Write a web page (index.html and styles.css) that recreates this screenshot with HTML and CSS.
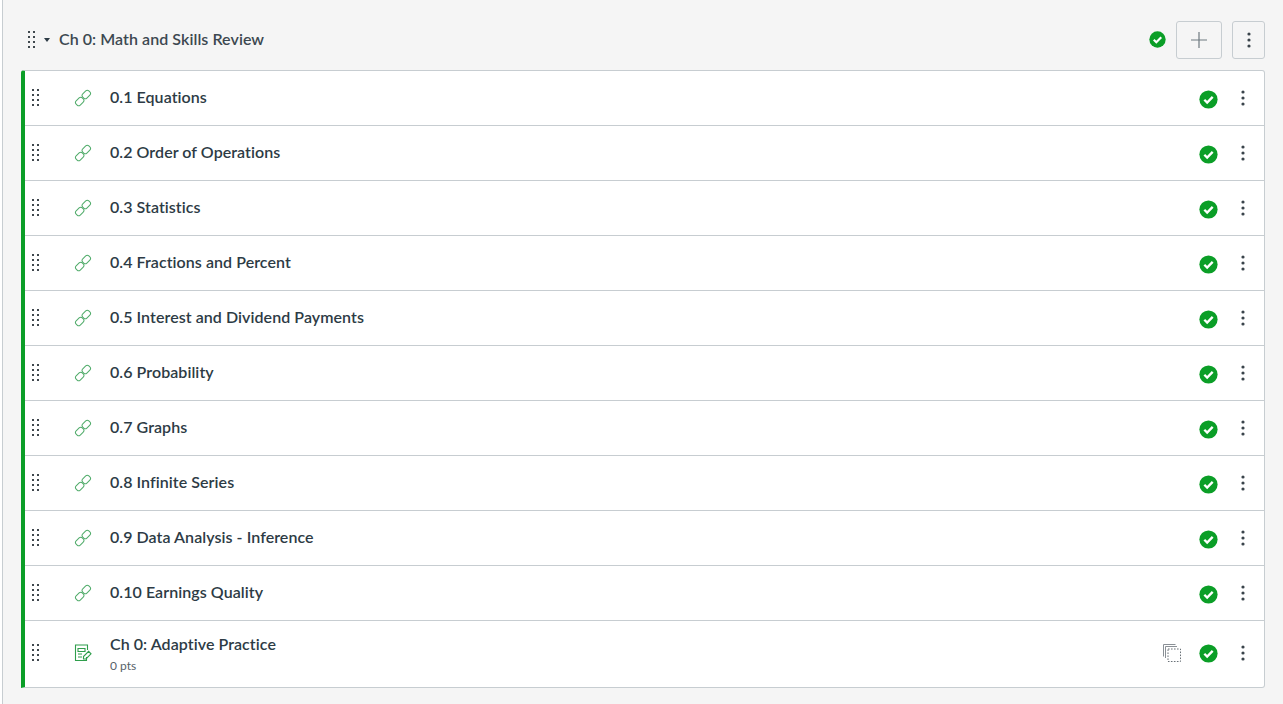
FILE: index.html
```html
<!DOCTYPE html>
<html lang="en">
<head>
<meta charset="utf-8">
<title>Modules</title>
<link rel="stylesheet" href="styles.css">
</head>
<body>
<svg class="defs" width="0" height="0" aria-hidden="true">
  <defs>
    <symbol id="grip" viewBox="0 0 10 18">
      <g fill="#3f474d">
        <rect x="1" y="0" width="2" height="2"/><rect x="6" y="0" width="2" height="2"/>
        <rect x="1" y="5" width="2" height="2"/><rect x="6" y="5" width="2" height="2"/>
        <rect x="1" y="10" width="2" height="2"/><rect x="6" y="10" width="2" height="2"/>
        <rect x="1" y="15" width="2" height="2"/><rect x="6" y="15" width="2" height="2"/>
      </g>
    </symbol>
    <symbol id="check" viewBox="0 0 20 20">
      <circle cx="10" cy="10" r="9.6" fill="#0b9e27"/>
      <path d="M5.6 10.3l3 3 5.8-6" fill="none" stroke="#fff" stroke-width="2.5"/>
    </symbol>
    <symbol id="dots" viewBox="0 0 4 16">
      <circle cx="2" cy="2" r="1.6" fill="#3a444b"/><circle cx="2" cy="8" r="1.6" fill="#3a444b"/><circle cx="2" cy="14" r="1.6" fill="#3a444b"/>
    </symbol>
    <symbol id="link" viewBox="0 0 18 18">
      <g fill="none" stroke="#4fab69" stroke-width="1">
        <rect x="1.4" y="9.6" width="8.6" height="5.8" rx="2.2" transform="rotate(-45 5.7 12.5)"/>
        <rect x="8" y="2.6" width="8.6" height="5.8" rx="2.2" transform="rotate(-45 12.3 5.5)"/>
      </g>
    </symbol>
    <symbol id="quiz" viewBox="0 0 18 18">
      <g fill="none" stroke="#2f9e4c" stroke-width="1.1">
        <path d="M13.5 6V1H1.5v15.5h11V13"/>
        <path d="M4 4.5h7v3H4zM4 10h4M4 13h4"/>
        <path d="M9.5 12.5v2.5h2.5l5-5.2-2.4-2.4z"/>
      </g>
    </symbol>
    <symbol id="copy" viewBox="0 0 20 20">
      <g fill="none" stroke="#8a9096" stroke-width="1">
        <path d="M13.5 1.5H1.5v12"/>
        <path d="M15 3.5H3.5v11.5"/>
        <path d="M6 6h12.5v12.5H6z" stroke-dasharray="1.6 1.4" stroke="#6b7278"/>
      </g>
    </symbol>
  </defs>
</svg>
<main class="page">
  <section class="module">
    <header class="module-head">
      <svg class="grip"><use href="#grip"/></svg>
      <span class="caret"></span>
      <h2 class="module-title">Ch 0: Math and Skills Review</h2>
      <svg class="check-small"><use href="#check"/></svg>
      <button class="btn btn-add" type="button" aria-label="Add">
        <svg width="16" height="16" viewBox="0 0 16 16"><path d="M8 0v16M0 8h16" stroke="#6f7a80" stroke-width="1.2"/></svg>
      </button>
      <button class="btn btn-more" type="button" aria-label="More">
        <svg class="dots"><use href="#dots"/></svg>
      </button>
    </header>
    <ul class="items">
      <li class="item"><svg class="grip item-grip"><use href="#grip"/></svg><svg class="type"><use href="#link"/></svg><div class="info"><a class="title">0.1 Equations</a></div><svg class="check"><use href="#check"/></svg><svg class="dots"><use href="#dots"/></svg></li>
      <li class="item"><svg class="grip item-grip"><use href="#grip"/></svg><svg class="type"><use href="#link"/></svg><div class="info"><a class="title">0.2 Order of Operations</a></div><svg class="check"><use href="#check"/></svg><svg class="dots"><use href="#dots"/></svg></li>
      <li class="item"><svg class="grip item-grip"><use href="#grip"/></svg><svg class="type"><use href="#link"/></svg><div class="info"><a class="title">0.3 Statistics</a></div><svg class="check"><use href="#check"/></svg><svg class="dots"><use href="#dots"/></svg></li>
      <li class="item"><svg class="grip item-grip"><use href="#grip"/></svg><svg class="type"><use href="#link"/></svg><div class="info"><a class="title">0.4 Fractions and Percent</a></div><svg class="check"><use href="#check"/></svg><svg class="dots"><use href="#dots"/></svg></li>
      <li class="item"><svg class="grip item-grip"><use href="#grip"/></svg><svg class="type"><use href="#link"/></svg><div class="info"><a class="title">0.5 Interest and Dividend Payments</a></div><svg class="check"><use href="#check"/></svg><svg class="dots"><use href="#dots"/></svg></li>
      <li class="item"><svg class="grip item-grip"><use href="#grip"/></svg><svg class="type"><use href="#link"/></svg><div class="info"><a class="title">0.6 Probability</a></div><svg class="check"><use href="#check"/></svg><svg class="dots"><use href="#dots"/></svg></li>
      <li class="item"><svg class="grip item-grip"><use href="#grip"/></svg><svg class="type"><use href="#link"/></svg><div class="info"><a class="title">0.7 Graphs</a></div><svg class="check"><use href="#check"/></svg><svg class="dots"><use href="#dots"/></svg></li>
      <li class="item"><svg class="grip item-grip"><use href="#grip"/></svg><svg class="type"><use href="#link"/></svg><div class="info"><a class="title">0.8 Infinite Series</a></div><svg class="check"><use href="#check"/></svg><svg class="dots"><use href="#dots"/></svg></li>
      <li class="item"><svg class="grip item-grip"><use href="#grip"/></svg><svg class="type"><use href="#link"/></svg><div class="info"><a class="title">0.9 Data Analysis - Inference</a></div><svg class="check"><use href="#check"/></svg><svg class="dots"><use href="#dots"/></svg></li>
      <li class="item"><svg class="grip item-grip"><use href="#grip"/></svg><svg class="type"><use href="#link"/></svg><div class="info"><a class="title">0.10 Earnings Quality</a></div><svg class="check"><use href="#check"/></svg><svg class="dots"><use href="#dots"/></svg></li>
      <li class="item item-last"><svg class="grip item-grip"><use href="#grip"/></svg><svg class="type"><use href="#quiz"/></svg><div class="info"><a class="title">Ch 0: Adaptive Practice</a><span class="pts">0 pts</span></div><svg class="copy"><use href="#copy"/></svg><svg class="check"><use href="#check"/></svg><svg class="dots"><use href="#dots"/></svg></li>
    </ul>
  </section>
</main>
</body>
</html>
```
FILE: styles.css
```css
* { box-sizing: border-box; }
html, body { margin: 0; height: 100%; overflow: hidden; }
body { background: #fff; font-family: Lato, "Liberation Sans", sans-serif; color: #2d3b45; }
.defs { display: block; position: absolute; }
.page { margin-left: 2px; height: 704px; background: #f5f5f5; border-left: 1px solid #c7cdd1; padding-left: 18px; padding-right: 18px; }
.module-head { height: 70px; display: flex; align-items: center; padding: 9px 0 0 6px; }
.grip { width: 10px; height: 18px; flex: none; }
.caret { width: 0; height: 0; border: 3.5px solid transparent; border-top: 4px solid #2d3b45; border-bottom: 0; margin: 1px 0 0 7px; flex: none; }
.module-title { margin: 0 0 2px 9px; font-size: 16px; font-weight: 600; letter-spacing: 0.06px; line-height: 20px; flex: 1; color: #3c4850; }
.check-small { width: 17px; height: 17px; margin-right: 10px; flex: none; }
.btn { height: 38px; border: 1px solid #c7cdd1; border-radius: 3px; background: #f5f5f5; padding: 0; display: flex; align-items: center; justify-content: center; }
.btn-add { width: 46px; margin-right: 10px; }
.btn-more { width: 33px; }
.dots { width: 4px; height: 16px; flex: none; }
.items { list-style: none; margin: 0; padding: 0; background: #fff; border: 1px solid #c7cdd1; border-left: 4px solid #0b9e27; border-radius: 3px 3px 3px 0; }
.item { height: 55px; display: flex; align-items: center; border-bottom: 1px solid #c7cdd1; padding-right: 19px; }
.item-last { height: 66px; border-bottom: 0; padding-bottom: 2px; }
.item-last .dots { margin-bottom: 1px; }
.item-grip { margin-left: 6px; }
.type { width: 18px; height: 18px; margin-left: 33px; flex: none; }
.info { flex: 1; margin: 0 0 2px 18px; display: flex; flex-direction: column; }
.item-last .info { margin-bottom: 0; }
.title { font-size: 16px; font-weight: 600; letter-spacing: 0.06px; line-height: 20px; color: #2d3b45; }
.pts { font-size: 12px; line-height: 15px; margin-top: 4px; color: #56626a; }
.copy { width: 20px; height: 20px; margin-right: 17px; flex: none; }
.check { width: 19px; height: 19px; margin: 2px 23px 0 0; flex: none; }
.item-last .check { margin-top: 0; }
```
